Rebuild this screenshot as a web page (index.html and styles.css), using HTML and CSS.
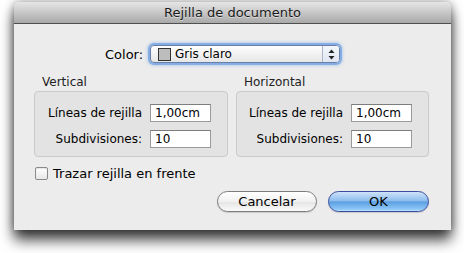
FILE: index.html
```html
<!DOCTYPE html><html>
<head><title>Rejilla de documento</title>
	<link rel="stylesheet" href="styles.css">
</head><body>
<div class="desk">
<div class="window">
	<div class="titlebar">Rejilla de documento</div>
	<div class="content">
		<div class="color-row">
			<label class="color-label">Color:</label>
			<div class="popup">
				<span class="swatch"></span>
				<span class="popup-text">Gris claro</span>
				<span class="stepper">
					<svg width="7" height="11" viewBox="0 0 7 11"><path d="M3.5 0.5 L6.5 4 L0.5 4 Z" fill="#222"/><path d="M0.5 7 L6.5 7 L3.5 10.5 Z" fill="#222"/></svg>
				</span>
			</div>
		</div>

		<div class="groups">
			<div class="group">
				<div class="group-title">Vertical</div>
				<div class="group-box">
					<label>Líneas de rejilla</label><input type="text" value="1,00cm">
					<label>Subdivisiones:</label><input type="text" value="10">
				</div>
			</div>
			<div class="group group-right">
				<div class="group-title">Horizontal</div>
				<div class="group-box">
					<label>Líneas de rejilla</label><input type="text" value="1,00cm">
					<label>Subdivisiones:</label><input type="text" value="10">
				</div>
			</div>
		</div>

		<div class="check-row">
			<span class="checkbox"></span>
			<span class="check-text">Trazar rejilla en frente</span>
		</div>

		<div class="buttons">
			<button class="btn">Cancelar</button>
			<button class="btn btn-ok">OK</button>
		</div>
	</div>
</div>
</div>
</body></html>
```

FILE: styles.css
```css
html,body{margin:0;padding:0;background:#fff;}
body{font-family:"DejaVu Sans","Liberation Sans",sans-serif;font-size:12px;color:#000;}

.desk{height:253px;padding-top:2px;box-sizing:border-box;overflow:hidden;}
.window{
	margin:0 0 0 14px;
	width:437px;height:228px;
	background:#ececec;
	border-radius:5px 5px 0 0;
	box-shadow:0 10px 14px rgba(0,0,0,0.75), 0 0 10px rgba(0,0,0,0.4);
}
.titlebar{
	height:21px;line-height:22px;
	text-align:center;font-size:13px;color:#1a1a1a;
	background:linear-gradient(#e6e6e6,#c4c4c4 55%,#a9a9a9);
	border-bottom:1px solid #4f4f4f;
	border-radius:5px 5px 0 0;
	text-shadow:0 1px 0 rgba(255,255,255,0.5);
}
.content{padding:0 22px 0 20px;}

.color-row{display:flex;align-items:center;margin-top:21px;padding-left:71px;}
.color-label{font-size:13px;width:44px;}
.popup{
	display:flex;align-items:center;
	width:188px;height:16px;
	margin-left:1px;
	border:1px solid #6a7fa8;border-radius:4px;
	background:linear-gradient(#fff,#f2f2f2 50%,#e6e6e6);
	box-shadow:0 0 0 2px rgba(110,160,225,0.75),0 0 3px 3px rgba(110,160,225,0.35);
}
.swatch{width:11px;height:11px;margin-left:7px;background:#bdbdbd;border:1px solid #333;}
.popup-text{flex:1;margin-left:4px;font-size:12px;}
.stepper{
	width:16px;height:16px;
	display:flex;align-items:center;justify-content:center;
	border-left:1px solid #aab5c8;
	background:linear-gradient(#f4f7fc,#dfe6f2);
	border-radius:0 3px 3px 0;
}

.groups{display:flex;gap:8px;margin-top:12px;}
.group{width:194px;}
.group-right{width:193px;}
.group-title{font-size:12px;color:#222;padding-left:8px;height:15px;line-height:15px;}
.group-box{
	margin-top:1px;
	height:48px;
	padding:10px 16px 6px 0;
	border:1px solid #cacaca;border-radius:4px;
	background:#e3e3e3;
	display:grid;
	grid-template-columns:auto 61px;
	justify-content:end;
	column-gap:8px;row-gap:4px;
	align-items:center;
}
.group-box label{text-align:right;font-size:12px;}
.group-box input{
	box-sizing:border-box;
	width:61px;height:18px;
	margin:0;padding:0 4px;
	border:1px solid #9a9a9a;border-top-color:#7d7d7d;
	background:#fff;
	font-family:"DejaVu Sans","Liberation Sans",sans-serif;font-size:12px;
}

.check-row{display:flex;align-items:center;margin-top:9px;padding-left:1px;}
.checkbox{
	width:11px;height:11px;
	border:1px solid #8a8a8a;border-radius:2px;
	background:linear-gradient(#fff,#e8e8e8);
	box-shadow:inset 0 1px 1px rgba(0,0,0,0.1);
}
.check-text{margin-left:5px;font-size:13px;}

.buttons{display:flex;justify-content:flex-end;gap:11px;margin-top:10px;}
.btn{
	box-sizing:border-box;
	width:100px;height:21px;
	border:1px solid #7c7c7c;border-radius:11px;
	background:linear-gradient(#fff,#f1f1f1 50%,#e4e4e4 51%,#fafafa);
	font-family:"DejaVu Sans","Liberation Sans",sans-serif;font-size:13px;color:#000;
	padding:0;
	box-shadow:0 1px 1px rgba(0,0,0,0.15);
}
.btn-ok{
	width:101px;
	border-color:#3a4c9c;
	background:linear-gradient(#cfe3fa,#8fbdee 45%,#5c9fe3 52%,#8cc6f7 90%,#bfe4ff);
}
```
